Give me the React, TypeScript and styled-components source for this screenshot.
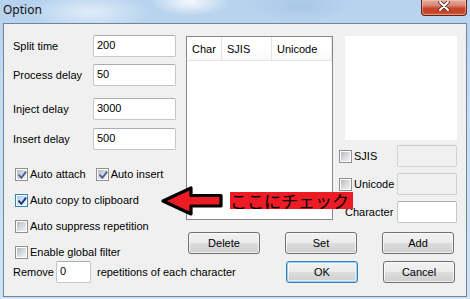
import React from 'react';
import styled, { createGlobalStyle } from 'styled-components';

const GlobalStyle = createGlobalStyle`
  html, body { margin: 0; padding: 0; width: 470px; height: 299px; overflow: hidden; }
  body { font-family: "Liberation Sans", Arial, sans-serif; font-size: 11px; color: #000; }
  * { box-sizing: border-box; }
`;

const Window = styled.div`
  width: 470px;
  height: 299px;
  display: flex;
  flex-direction: column;
  background:
    radial-gradient(ellipse 40px 14px at 190px 2px, rgba(255,255,255,0.85), rgba(255,255,255,0) 100%),
    radial-gradient(ellipse 60px 18px at 90px 12px, rgba(240,248,255,0.7), rgba(255,255,255,0) 100%),
    radial-gradient(ellipse 50px 16px at 300px 6px, rgba(150,185,220,0.45), rgba(255,255,255,0) 100%),
    linear-gradient(180deg, #b7d2ee 0%, #c8def3 45%, #cfe3f5 100%);
`;

const TitleBar = styled.div`
  height: 23px;
  display: flex;
  justify-content: space-between;
  align-items: flex-start;
  padding-left: 3px;
  padding-right: 3px;
`;

const TitleText = styled.div`
  font-family: "Noto Sans", "Open Sans", sans-serif;
  font-size: 12px;
  line-height: 16px;
  margin-top: 2px;
  color: #111;
`;

const CloseButton = styled.div`
  width: 46px;
  height: 16px;
  border: 1px solid #5e2318;
  border-top: none;
  border-radius: 0 0 4px 4px;
  background: linear-gradient(180deg, #e4ab9c 0%, #d98a76 35%, #c9472f 55%, #c4412a 80%, #d0683e 100%);
  box-shadow: inset 0 0 0 1px rgba(255, 210, 200, 0.45);
  display: flex;
  align-items: center;
  justify-content: center;
  padding-bottom: 3px;
`;

const Frame = styled.div`
  flex: 1;
  display: flex;
  padding: 0 3px 2px 3px;
`;

const Client = styled.div`
  position: relative;
  flex: 1;
  display: flex;
  flex-direction: column;
  background: #f0f0f0;
  border: 1px solid #70849b;
`;

const Main = styled.div`
  display: flex;
`;

const LeftCol = styled.div`
  width: 182px;
  padding-left: 9px;
  display: flex;
  flex-direction: column;
`;

const FieldRow = styled.div<{ $mt: number }>`
  display: flex;
  align-items: center;
  height: 22px;
  margin-top: ${(p) => p.$mt}px;
`;

const FieldLabel = styled.div`
  width: 80px;
  white-space: nowrap;
`;

const TextBox = styled.div<{ $w: number; $disabled?: boolean }>`
  width: ${(p) => p.$w}px;
  height: 22px;
  border: 1px solid ${(p) => (p.$disabled ? '#d2d2d2' : '#c3c6cc')};
  border-top-color: ${(p) => (p.$disabled ? '#cacaca' : '#abadb3')};
  border-radius: 2px;
  background: ${(p) => (p.$disabled ? '#f0f0f0' : '#ffffff')};
  padding: 3px 0 0 3px;
  line-height: 13px;
  white-space: nowrap;
`;

const CheckRow = styled.div<{ $mt: number }>`
  display: flex;
  align-items: center;
  height: 16px;
  margin-top: ${(p) => p.$mt}px;
  padding-left: 2px;
`;

const CheckItem = styled.div<{ $ml?: number }>`
  display: flex;
  align-items: center;
  margin-left: ${(p) => p.$ml ?? 0}px;
  white-space: nowrap;
`;

const Box = styled.div<{ $hot?: boolean }>`
  position: relative;
  width: 13px;
  height: 13px;
  flex: none;
  border: 1px solid ${(p) => (p.$hot ? '#3c7fb1' : '#8e8f8f')};
  background: #fff;
  padding: 1px;
  & > span {
    display: block;
    width: 9px;
    height: 9px;
    background: ${(p) =>
      p.$hot
        ? 'linear-gradient(135deg, #9fcdf2 0%, #d6ecfc 70%, #eef8fe 100%)'
        : 'linear-gradient(135deg, #b4b8be 0%, #dcdde0 55%, #f2f2f2 100%)'};
  }
  & > svg {
    position: absolute;
    left: 1px;
    top: 1px;
  }
`;

const CheckLabel = styled.span`
  margin-left: 2px;
`;

const RightArea = styled.div`
  flex: 1;
  display: flex;
  flex-direction: column;
`;

const TopRow = styled.div`
  display: flex;
  margin-top: 12px;
`;

const ListView = styled.div`
  width: 147px;
  height: 184px;
  border: 1px solid #828790;
  background: #fff;
`;

const ListHeader = styled.div`
  display: flex;
  height: 24px;
  border-bottom: 1px solid #e5e5e5;
  background: linear-gradient(180deg, #ffffff 0%, #ffffff 55%, #f7f8f9 100%);
`;

const HeaderCell = styled.div<{ $w?: number }>`
  width: ${(p) => (p.$w ? `${p.$w}px` : 'auto')};
  flex: ${(p) => (p.$w ? 'none' : '1')};
  padding-left: 5px;
  display: flex;
  align-items: center;
  border-right: 1px solid #e5e5e5;
`;

const RightPanel = styled.div`
  width: 118px;
  margin-left: 6px;
  display: flex;
  flex-direction: column;
`;

const Preview = styled.div`
  width: 112px;
  height: 104px;
  margin-left: 6px;
  background: #fff;
`;

const PanelRow = styled.div<{ $mt: number }>`
  display: flex;
  align-items: center;
  justify-content: space-between;
  height: 22px;
  margin-top: ${(p) => p.$mt}px;
`;

const PanelLabel = styled.span`
  margin-left: 6px;
`;

const ButtonRow = styled.div`
  display: flex;
  gap: 25px;
  margin-top: 9px;
  padding-left: 2px;
`;

const Button = styled.div<{ $default?: boolean }>`
  width: 72px;
  height: 22px;
  display: flex;
  align-items: center;
  justify-content: center;
  border: 1px solid ${(p) => (p.$default ? '#3c7fb1' : '#707070')};
  border-radius: 3px;
  background: ${(p) =>
    p.$default
      ? 'linear-gradient(180deg, #eaf6fd 0%, #d9f0fc 50%, #bee6fd 50%, #a7d9f5 100%)'
      : 'linear-gradient(180deg, #f2f2f2 0%, #ebebeb 50%, #dddddd 50%, #cfcfcf 100%)'};
  box-shadow: inset 0 0 0 1px ${(p) => (p.$default ? 'rgba(255,255,255,0.55)' : 'rgba(255,255,255,0.7)')};
  ${(p) => (p.$default ? 'background: linear-gradient(180deg, #f2f2f2 0%, #ebebeb 50%, #dddddd 50%, #cfcfcf 100%); box-shadow: inset 0 0 0 1px #8fd2f4, inset 0 0 0 2px rgba(255,255,255,0.5);' : '')}
`;

const BottomRow = styled.div`
  display: flex;
  align-items: center;
  height: 22px;
  margin-top: 1px;
  padding-left: 9px;
  padding-right: 11px;
`;

const InlineBox = styled.div`
  margin-left: 2px;
`;

const TrailText = styled.span`
  margin-left: 6px;
  white-space: nowrap;
`;

const ButtonGroup = styled.div`
  display: flex;
  gap: 25px;
  margin-left: auto;
`;

const ArrowSvg = styled.svg`
  position: absolute;
  left: 154px;
  top: 160px;
  overflow: visible;
`;

const Note = styled.div`
  position: absolute;
  left: 226px;
  top: 168px;
  height: 17px;
  padding-right: 4px;
  background: #ed1c24;
  color: #000;
  font-family: "Noto Sans CJK JP", sans-serif;
  font-size: 17px;
  line-height: 17px;
  white-space: nowrap;
`;

type CheckProps = { checked?: boolean; hot?: boolean };

const Check: React.FC<CheckProps> = ({ checked, hot }) => (
  <Box $hot={hot}>
    <span />
    {checked && (
      <svg width="11" height="11" viewBox="0 0 11 11">
        <path
          d="M2.2 5.4 L4.3 7.8 L8.6 2.4"
          fill="none"
          stroke={hot ? '#1c3270' : '#4b5f96'}
          strokeWidth="1.9"
          strokeLinecap="square"
        />
      </svg>
    )}
  </Box>
);

const fields = [
  { label: 'Split time', value: '200', mt: 11 },
  { label: 'Process delay', value: '50', mt: 7 },
  { label: 'Inject delay', value: '3000', mt: 12 },
  { label: 'Insert delay', value: '500', mt: 8 },
];

export default function App() {
  return (
    <>
      <GlobalStyle />
      <Window>
        <TitleBar>
          <TitleText>Option</TitleText>
          <CloseButton>
            <svg width="12" height="10" viewBox="0 0 12 10">
              <path d="M2 1 L10 9 M10 1 L2 9" stroke="#4a2a26" strokeWidth="3.6" strokeLinecap="round" />
              <path d="M2 1 L10 9 M10 1 L2 9" stroke="#ffffff" strokeWidth="2" strokeLinecap="round" />
            </svg>
          </CloseButton>
        </TitleBar>
        <Frame>
          <Client>
            <Main>
              <LeftCol>
                {fields.map((f) => (
                  <FieldRow key={f.label} $mt={f.mt}>
                    <FieldLabel>{f.label}</FieldLabel>
                    <TextBox $w={83}>{f.value}</TextBox>
                  </FieldRow>
                ))}
                <CheckRow $mt={16}>
                  <CheckItem>
                    <Check checked />
                    <CheckLabel>Auto attach</CheckLabel>
                  </CheckItem>
                  <CheckItem $ml={10}>
                    <Check checked />
                    <CheckLabel>Auto insert</CheckLabel>
                  </CheckItem>
                </CheckRow>
                <CheckRow $mt={10}>
                  <CheckItem>
                    <Check checked hot />
                    <CheckLabel>Auto copy to clipboard</CheckLabel>
                  </CheckItem>
                </CheckRow>
                <CheckRow $mt={10}>
                  <CheckItem>
                    <Check />
                    <CheckLabel>Auto suppress repetition</CheckLabel>
                  </CheckItem>
                </CheckRow>
                <CheckRow $mt={10}>
                  <CheckItem>
                    <Check />
                    <CheckLabel>Enable global filter</CheckLabel>
                  </CheckItem>
                </CheckRow>
              </LeftCol>
              <RightArea>
                <TopRow>
                  <ListView>
                    <ListHeader>
                      <HeaderCell $w={35}>Char</HeaderCell>
                      <HeaderCell $w={50}>SJIS</HeaderCell>
                      <HeaderCell>Unicode</HeaderCell>
                    </ListHeader>
                  </ListView>
                  <RightPanel>
                    <Preview />
                    <PanelRow $mt={5}>
                      <CheckItem>
                        <Check />
                        <CheckLabel>SJIS</CheckLabel>
                      </CheckItem>
                      <TextBox $w={60} $disabled />
                    </PanelRow>
                    <PanelRow $mt={6}>
                      <CheckItem>
                        <Check />
                        <CheckLabel>Unicode</CheckLabel>
                      </CheckItem>
                      <TextBox $w={60} $disabled />
                    </PanelRow>
                    <PanelRow $mt={6}>
                      <PanelLabel>Character</PanelLabel>
                      <TextBox $w={60} />
                    </PanelRow>
                  </RightPanel>
                </TopRow>
                <ButtonRow>
                  <Button>Delete</Button>
                  <Button>Set</Button>
                  <Button>Add</Button>
                </ButtonRow>
              </RightArea>
            </Main>
            <BottomRow>
              <span>Remove</span>
              <InlineBox>
                <TextBox $w={35}>0</TextBox>
              </InlineBox>
              <TrailText>repetitions of each character</TrailText>
              <ButtonGroup>
                <Button $default>OK</Button>
                <Button>Cancel</Button>
              </ButtonGroup>
            </BottomRow>
            <ArrowSvg width="68" height="34" viewBox="0 0 68 34">
              <polygon
                points="5,17 33,4 33,11.5 63,11.5 63,22 33,22 33,30"
                fill="#ed1c24"
                stroke="#000"
                strokeWidth="3.2"
                strokeLinejoin="round"
              />
            </ArrowSvg>
            <Note>ここにチェック</Note>
          </Client>
        </Frame>
      </Window>
    </>
  );
}
